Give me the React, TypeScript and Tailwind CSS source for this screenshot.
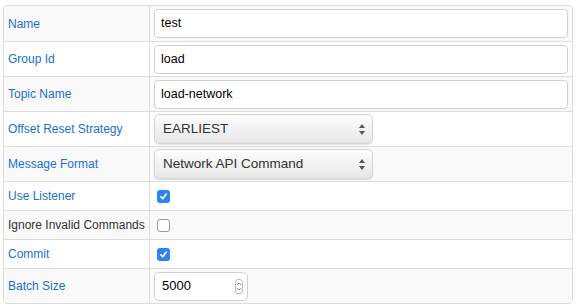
import React from 'react'

type Row = {
  label: string
  kind: 'text' | 'select' | 'check' | 'number'
  value?: string
  checked?: boolean
  muted?: boolean
  h: string
}

const rows: Row[] = [
  { label: 'Name', kind: 'text', value: 'test', h: 'h-[35px]' },
  { label: 'Group Id', kind: 'text', value: 'load', h: 'h-[35px]' },
  { label: 'Topic Name', kind: 'text', value: 'load-network', h: 'h-[35px]' },
  { label: 'Offset Reset Strategy', kind: 'select', value: 'EARLIEST', h: 'h-[35px]' },
  { label: 'Message Format', kind: 'select', value: 'Network API Command', h: 'h-[35px]' },
  { label: 'Use Listener', kind: 'check', checked: true, h: 'h-[29px]' },
  { label: 'Ignore Invalid Commands', kind: 'check', checked: false, muted: true, h: 'h-[29px]' },
  { label: 'Commit', kind: 'check', checked: true, h: 'h-[29px]' },
  { label: 'Batch Size', kind: 'number', value: '5000', h: 'h-[35px]' },
]

function Arrows() {
  return (
    <svg width="8" height="13" viewBox="0 0 8 13" className="text-[#555]">
      <path d="M4 1 L7 5 L1 5 Z" fill="currentColor" />
      <path d="M4 12 L7 8 L1 8 Z" fill="currentColor" />
    </svg>
  )
}

function Field({ row }: { row: Row }) {
  if (row.kind === 'text') {
    return (
      <div className="ml-[4px] mr-[4px] flex h-[29px] flex-1 items-center rounded-[4px] border border-[#cfcfcf] bg-white px-[6px] text-[12.5px] text-black">
        {row.value}
      </div>
    )
  }
  if (row.kind === 'select') {
    return (
      <div className="ml-[4px] flex h-[30px] w-[219px] items-center justify-between rounded-[5px] border border-[#d4d4d4] bg-gradient-to-b from-[#fdfdfd] to-[#e6e6e6] pl-[8px] pr-[6px] text-[13.5px] text-[#333] shadow-[0_1px_1px_rgba(0,0,0,0.12)]">
        <span>{row.value}</span>
        <Arrows />
      </div>
    )
  }
  if (row.kind === 'check') {
    return row.checked ? (
      <div className="ml-[7px] flex h-[13px] w-[13px] items-center justify-center rounded-[3px] bg-[#2d83f6]">
        <svg width="9" height="9" viewBox="0 0 9 9">
          <path d="M1.8 4.8 L3.7 6.8 L7.3 2" stroke="white" strokeWidth="1.6" fill="none" strokeLinecap="round" strokeLinejoin="round" />
        </svg>
      </div>
    ) : (
      <div className="ml-[7px] h-[13px] w-[13px] rounded-[3px] border border-[#9a9a9a] bg-white" />
    )
  }
  return (
    <div className="ml-[4px] flex h-[29px] w-[94px] items-center justify-between rounded-[5px] border border-[#cfcfcf] bg-white pl-[7px] pr-[4px] text-[13px] text-black">
      <span>{row.value}</span>
      <div className="flex h-[15px] w-[8px] flex-col items-center justify-center rounded-[3px] border border-[#bbb]">
        <svg width="6" height="11" viewBox="0 0 6 11">
          <path d="M1 4 L3 2 L5 4" stroke="#777" strokeWidth="0.9" fill="none" />
          <path d="M1 7 L3 9 L5 7" stroke="#777" strokeWidth="0.9" fill="none" />
        </svg>
      </div>
    </div>
  )
}

export default function App() {
  return (
    <div className="h-[306px] w-[576px] bg-white pl-[3px] pt-[5px] font-['Liberation_Sans',Arial,sans-serif]">
      <div className="w-[570px] overflow-hidden rounded-[4px] border border-[#dddddd]">
        {rows.map((row, i) => (
          <div
            key={row.label}
            className={`flex ${row.h} ${i > 0 ? 'border-t border-[#dddddd]' : ''} ${i % 2 === 0 ? 'bg-[#f9f9f9]' : 'bg-white'}`}
          >
            <div
              className={`flex w-[146px] shrink-0 items-center border-r border-[#dddddd] pl-[4px] text-[12px] ${row.muted ? 'text-[#333]' : 'text-[#1a6fd1]'}`}
            >
              {row.label}
            </div>
            <div className="flex flex-1 items-center">
              <Field row={row} />
            </div>
          </div>
        ))}
      </div>
    </div>
  )
}
